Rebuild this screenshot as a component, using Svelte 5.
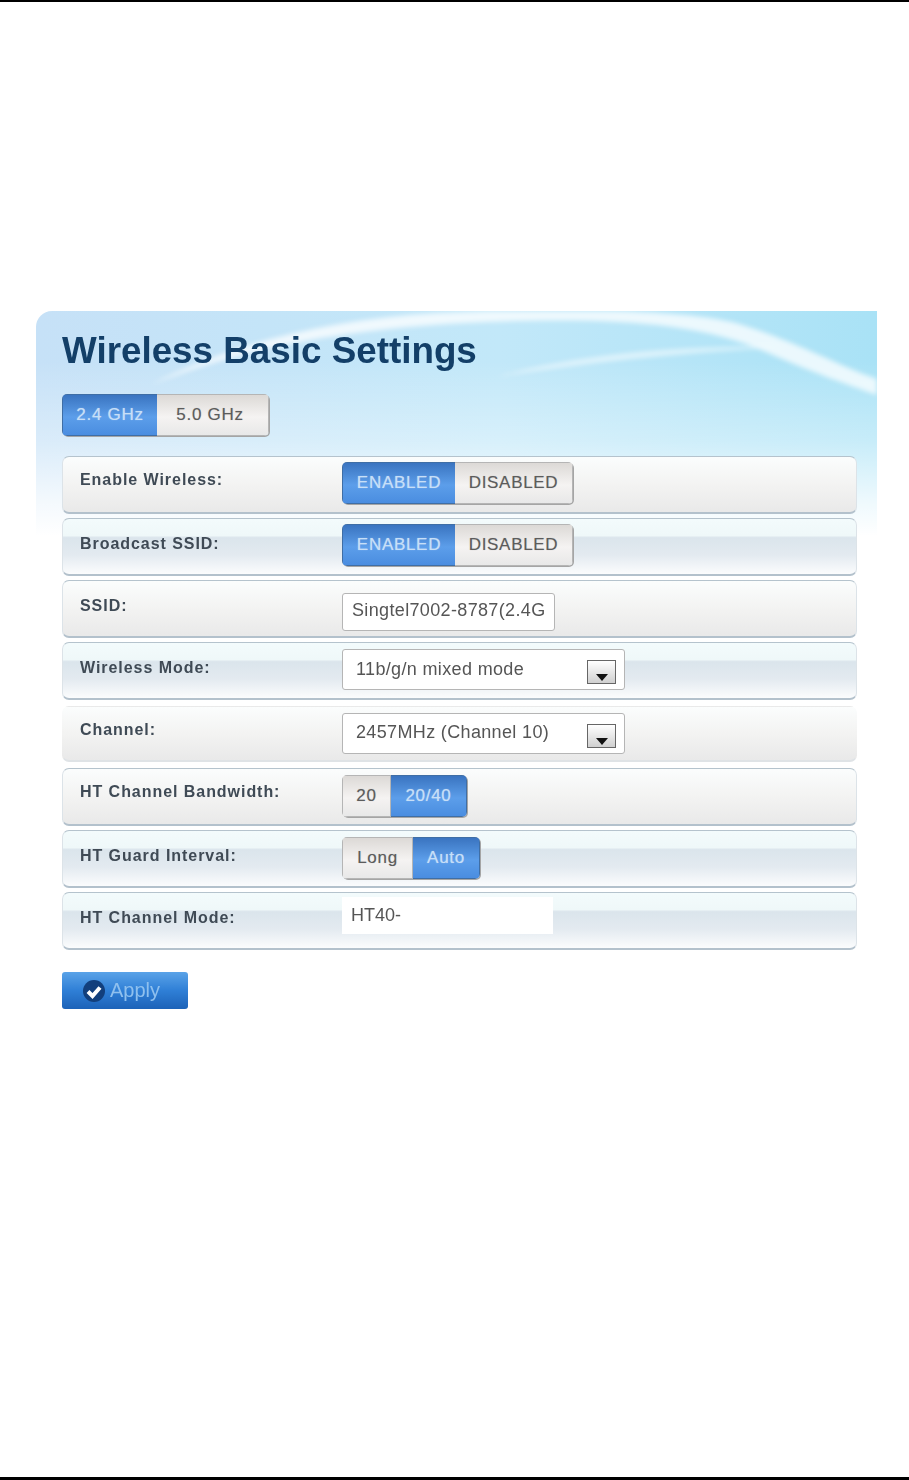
<script lang="ts">
  const rows = [
    { label: "Enable Wireless:", kind: "toggle", tone: "warm", options: ["ENABLED", "DISABLED"], active: 0, widths: [113, 118] },
    { label: "Broadcast SSID:", kind: "toggle", tone: "blue", options: ["ENABLED", "DISABLED"], active: 0, widths: [113, 118] },
    { label: "SSID:", kind: "input", tone: "warm low", value: "Singtel7002-8787(2.4G" },
    { label: "Wireless Mode:", kind: "select", tone: "blue", value: "11b/g/n mixed mode" },
    { label: "Channel:", kind: "select", tone: "warm soft", value: "2457MHz (Channel 10)" },
    { label: "HT Channel Bandwidth:", kind: "toggle", tone: "warm", options: ["20", "20/40"], active: 1, widths: [49, 76] },
    { label: "HT Guard Interval:", kind: "toggle", tone: "blue", options: ["Long", "Auto"], active: 1, widths: [71, 67] },
    { label: "HT Channel Mode:", kind: "text", tone: "blue", value: "HT40-" }
  ];
</script>

<div class="page">
  <section class="panel">
    <svg class="swoosh" viewBox="0 0 841 230" aria-hidden="true">
      <path d="M114 74C220 32 330 16 450 11C560 7 660 9 730 41C780 63 810 73 841 84L841 68C800 54 760 30 700 12C640 -3 500 -3 400 2C300 8 200 30 114 74Z" fill="#fff" opacity="0.75" />
      <path d="M460 66C540 44 640 34 750 36C650 41 550 51 460 66Z" fill="#fff" opacity="0.55" />
    </svg>

    <div class="content">
      <h1>Wireless Basic Settings</h1>

      <div class="seg tabs">
        <span class="opt on w-95">2.4 GHz</span>
        <span class="opt w-112">5.0 GHz</span>
      </div>

      <div class="rows">
        {#each rows as row}
          <div class="row {row.tone}">
            <span class="label">{row.label}</span>
            {#if row.kind === "toggle"}
              <div class="seg">
                {#each row.options as opt, j}
                  <span class="opt" class:on={j === row.active} style="width: {row.widths[j]}px">{opt}</span>
                {/each}
              </div>
            {:else if row.kind === "input"}
              <div class="input">{row.value}</div>
            {:else if row.kind === "select"}
              <div class="select">
                <span class="select-text">{row.value}</span>
                <span class="arrow">
                  <svg width="14" height="7" viewBox="0 0 14 7" aria-hidden="true"><path d="M1 0h12L7 7z" fill="#111" /></svg>
                </span>
              </div>
            {:else}
              <div class="value">{row.value}</div>
            {/if}
          </div>
        {/each}
      </div>

      <button class="apply">
        <svg width="24" height="24" viewBox="0 0 24 24" aria-hidden="true">
          <circle cx="12" cy="12" r="11" fill="#123f7c" />
          <path d="M6 12.5l4.5 4.5L18 8.5" fill="none" stroke="#fff" stroke-width="4" />
        </svg>
        <span>Apply</span>
      </button>
    </div>
  </section>
</div>

<style>
  :global(body) {
    margin: 0;
    background: #fff;
  }

  .page {
    box-sizing: border-box;
    height: 1480px;
    padding: 309px 32px 0 36px;
    border-top: 2px solid #000;
    border-bottom: 3px solid #000;
    font-family: "Liberation Sans", Arial, sans-serif;
    color: #444;
  }

  .panel {
    position: relative;
    overflow: hidden;
    border-radius: 16px 0 0 0;
    background:
      linear-gradient(180deg, rgba(255, 255, 255, 0) 50px, rgba(255, 255, 255, 0.35) 130px, rgba(255, 255, 255, 0.8) 190px, #fff 225px) no-repeat 0 0 / 100% 230px,
      linear-gradient(90deg, #c6e1f7, #c2e8f9 55%, #a9e2f6) no-repeat 0 0 / 100% 230px;
  }

  .swoosh {
    position: absolute;
    left: 0;
    top: 0;
    width: 841px;
    height: 230px;
    filter: blur(2.5px);
  }

  .content {
    position: relative;
    padding: 18px 20px 0 26px;
    filter: blur(0.5px);
  }

  h1 {
    margin: 0;
    font-size: 36.8px;
    line-height: 44px;
    font-weight: bold;
    color: #133f68;
  }

  .tabs {
    margin-top: 21px;
  }

  .seg {
    display: inline-flex;
    height: 42px;
    border-radius: 5px;
    box-shadow: 1px 1px 0 #a5a5a5;
    overflow: hidden;
    vertical-align: top;
  }

  .opt {
    display: flex;
    align-items: center;
    justify-content: center;
    box-sizing: border-box;
    font-size: 17px;
    color: #5c5c5c;
    letter-spacing: 0.7px;
    text-shadow: 0 0 1px rgba(80, 80, 80, 0.35);
    background: linear-gradient(180deg, #dcd9d6, #f5f3f2 55%, #e8e8e8);
    border: 1px solid #b5b5b5;
    border-left: 0;
  }

  .opt:first-child {
    border-left: 1px solid #b5b5b5;
  }

  .opt.on {
    color: #c7dff7;
    text-shadow: 0 0 1px rgba(220, 235, 250, 0.6);
    background: linear-gradient(180deg, #3a74c0, #5c9eea 55%, #4a8de0);
    border-color: #3f6ea5;
    border-right: 0;
  }

  .opt.on:last-child {
    border-right: 1px solid #3f6ea5;
  }

  .w-95 {
    width: 95px;
  }

  .w-112 {
    width: 112px;
    padding-right: 5px;
  }

  .rows {
    display: flex;
    flex-direction: column;
    gap: 4px;
    margin-top: 20px;
  }

  .row {
    display: flex;
    box-sizing: border-box;
    height: 58px;
    padding: 6px 0 0 17px;
    border: 1px solid #dce3e8;
    border-top-color: #b5c3cd;
    border-bottom: 2px solid #b3c1cc;
    border-radius: 7px;
  }

  .row.warm {
    background: linear-gradient(180deg, #fbfdfd, #f3f3f2 50%, #e9e9e9);
  }

  .row.blue {
    background: linear-gradient(180deg, #f3fbfc 0, #eff8f9 30%, #dbe5ec 34%, #e3eaf0 65%, #fbfcfd 100%);
  }

  .row.soft {
    height: 56px;
    margin: 2px 0;
    border-color: transparent;
    border-bottom-color: #dfe3e6;
  }

  .label {
    width: 262px;
    padding-top: 8px;
    font-size: 16px;
    font-weight: bold;
    letter-spacing: 0.95px;
    color: #3f4a55;
  }

  .blue .label,
  .low .label {
    padding-top: 10px;
  }

  .row:nth-child(-n + 2) .seg {
    margin-top: -1px;
  }

  .input,
  .select {
    box-sizing: border-box;
    background: #fff;
    border: 1px solid #b5b5b5;
    border-radius: 3px;
    font-size: 18px;
    color: #555;
    letter-spacing: 0.35px;
  }

  .input {
    width: 213px;
    height: 38px;
    margin-top: 6px;
    padding: 6px 0 0 9px;
  }

  .select {
    display: flex;
    align-items: center;
    justify-content: space-between;
    width: 283px;
    height: 41px;
    padding: 0 8px 0 13px;
  }

  .soft .select-text {
    margin-bottom: 3px;
  }

  .arrow {
    display: flex;
    align-items: flex-end;
    justify-content: center;
    box-sizing: border-box;
    width: 29px;
    height: 24px;
    margin-top: 4px;
    padding-bottom: 2px;
    border: 1px solid #666;
    background: linear-gradient(180deg, #fff, #d0d0d0);
  }

  .value {
    box-sizing: border-box;
    width: 211px;
    height: 37px;
    margin-top: -2px;
    padding: 8px 0 0 9px;
    background: #fff;
    font-size: 18px;
    color: #555;
  }

  .apply {
    display: flex;
    align-items: center;
    gap: 4px;
    box-sizing: border-box;
    width: 126px;
    height: 37px;
    margin-top: 22px;
    padding: 0 0 0 20px;
    border: 0;
    border-radius: 3px;
    background: linear-gradient(180deg, #5aa3e8, #2f7fd6 50%, #1c62b8);
    font-family: inherit;
    font-size: 20px;
    color: #8fc0ee;
  }
</style>
